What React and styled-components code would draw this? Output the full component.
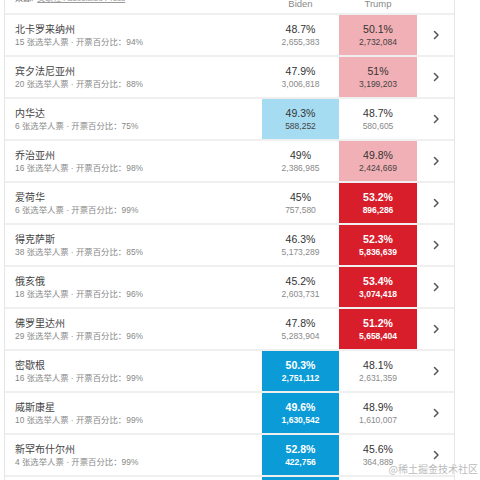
import React from 'react'
import styled, { createGlobalStyle } from 'styled-components';

const GlobalStyle = createGlobalStyle`
    html, body {
        margin: 0;
        padding: 0;
        background: #fff;
        overflow: hidden;
    }
    body {
        font-family: "Liberation Sans", Arial, "Noto Sans CJK SC", sans-serif;
    }
`;

const Page = styled.div`
    position: relative;
    width: 480px;
    height: 480px;
    overflow: hidden;
`;

const Table = styled.div`
    margin-left: 4px;
    width: 449px;
    border-left: 1px solid #e6e6e6;
    border-right: 1px solid #e6e6e6;
    margin-top: -9px;
`;

const HeaderRow = styled.div`
    display: flex;
    align-items: flex-end;
    height: 22px;
    border-bottom: 2px solid #efefef;
`;

const Source = styled.div`
    flex: 1;
    padding: 0 0 9px 10px;
    font-size: 8px;
    color: #555;
    line-height: 10px;
`;

const SourceLink = styled.span`
    color: #999;
    text-decoration: underline;
    margin-left: 4px;
`;

const HeaderCell = styled.div`
    width: ${props => props.w}px;
    text-align: center;
    font-size: 9.5px;
    color: #8a8a8a;
    line-height: 12px;
    padding-bottom: 3px;
`;

const HeaderSpacer = styled.div`
    width: 37px;
`;

const Row = styled.div`
    display: flex;
    height: 40px;
    border-bottom: 2px solid #efefef;
`;

const StateCell = styled.div`
    flex: 1;
    padding-left: 10px;
    display: flex;
    flex-direction: column;
    justify-content: center;
`;

const StateName = styled.div`
    font-size: 10px;
    color: #444;
    line-height: 13px;
`;

const StateInfo = styled.div`
    font-size: 8.4px;
    color: #888;
    line-height: 11px;
    margin-top: 1px;
`;

const VoteCell = styled.div`
    width: ${props => props.w}px;
    display: flex;
    flex-direction: column;
    align-items: center;
    justify-content: center;
    background: ${props => props.bg || 'transparent'};
    color: ${props => (props.strong ? '#fff' : '#333')};
    font-weight: ${props => (props.strong ? 700 : 400)};
`;

const Percent = styled.div`
    font-size: 10.5px;
    line-height: 13px;
`;

const Count = styled.div`
    font-size: 8.5px;
    line-height: 11px;
    margin-top: 1px;
    color: ${props => (props.strong ? '#fff' : props.light ? '#444' : '#8a8a8a')};
`;

const ArrowCell = styled.div`
    width: 37px;
    display: flex;
    align-items: center;
    justify-content: center;
`;

const Watermark = styled.div`
    position: absolute;
    right: 2px;
    bottom: 4px;
    font-family: "Noto Sans CJK SC", "Liberation Serif", serif;
    font-size: 10px;
    color: #bbb;
    text-shadow: 0 0 2px #fff, 0 0 2px #fff;
`;

const COLORS = {
    redLight: '#f1b0b5',
    red: '#d81e2b',
    blueLight: '#a6dcf1',
    blue: '#0b9bd7',
};

const states = [
    { name: '北卡罗来纳州', ev: 15, pct: 94, b: ['48.7%', '2,655,383'], t: ['50.1%', '2,732,084'], win: 't', tone: 'light' },
    { name: '宾夕法尼亚州', ev: 20, pct: 88, b: ['47.9%', '3,006,818'], t: ['51%', '3,199,203'], win: 't', tone: 'light' },
    { name: '内华达', ev: 6, pct: 75, b: ['49.3%', '588,252'], t: ['48.7%', '580,605'], win: 'b', tone: 'light' },
    { name: '乔治亚州', ev: 16, pct: 98, b: ['49%', '2,386,985'], t: ['49.8%', '2,424,669'], win: 't', tone: 'light' },
    { name: '爱荷华', ev: 6, pct: 99, b: ['45%', '757,580'], t: ['53.2%', '896,286'], win: 't', tone: 'strong' },
    { name: '得克萨斯', ev: 38, pct: 85, b: ['46.3%', '5,173,289'], t: ['52.3%', '5,836,639'], win: 't', tone: 'strong' },
    { name: '俄亥俄', ev: 18, pct: 96, b: ['45.2%', '2,603,731'], t: ['53.4%', '3,074,418'], win: 't', tone: 'strong' },
    { name: '佛罗里达州', ev: 29, pct: 96, b: ['47.8%', '5,283,904'], t: ['51.2%', '5,658,404'], win: 't', tone: 'strong' },
    { name: '密歇根', ev: 16, pct: 99, b: ['50.3%', '2,751,112'], t: ['48.1%', '2,631,359'], win: 'b', tone: 'strong' },
    { name: '威斯康星', ev: 10, pct: 99, b: ['49.6%', '1,630,542'], t: ['48.9%', '1,610,007'], win: 'b', tone: 'strong' },
    { name: '新罕布什尔州', ev: 4, pct: 99, b: ['52.8%', '422,756'], t: ['45.6%', '364,889'], win: 'b', tone: 'strong' },
    { name: '明尼苏达州', ev: 10, pct: 99, b: ['52.6%', '1,717,077'], t: ['45.4%', '1,484,065'], win: 'b', tone: 'strong' },
];

const Chevron = () => (
    <svg width="8" height="12" viewBox="0 0 8 12">
        <path d="M2.5 2.5 L6 6 L2.5 9.5" fill="none" stroke="#555" strokeWidth="1.5" strokeLinecap="round" strokeLinejoin="round" />
    </svg>
);

const Vote = ({ data, w, win, tone, red }) => {
    const strong = win && tone === 'strong';
    const light = win && tone === 'light';
    let bg;
    if (win) {
        if (red) bg = strong ? COLORS.red : COLORS.redLight;
        else bg = strong ? COLORS.blue : COLORS.blueLight;
    }
    return (
        <VoteCell w={w} bg={bg} strong={strong}>
            <Percent>{data[0]}</Percent>
            <Count strong={strong} light={light}>{data[1]}</Count>
        </VoteCell>
    );
};

const App = () => {
    return (
        <Page>
            <GlobalStyle />
            <Table>
                <HeaderRow>
                    <Source>
                        来源:<SourceLink>美联社 Associated Press</SourceLink>
                    </Source>
                    <HeaderCell w={77}>Biden</HeaderCell>
                    <HeaderCell w={78}>Trump</HeaderCell>
                    <HeaderSpacer />
                </HeaderRow>
                {states.map((s) => (
                    <Row key={s.name}>
                        <StateCell>
                            <StateName>{s.name}</StateName>
                            <StateInfo>{s.ev} 张选举人票 · 开票百分比：{s.pct}%</StateInfo>
                        </StateCell>
                        <Vote data={s.b} w={77} win={s.win === 'b'} tone={s.tone} />
                        <Vote data={s.t} w={78} win={s.win === 't'} tone={s.tone} red />
                        <ArrowCell>
                            <Chevron />
                        </ArrowCell>
                    </Row>
                ))}
            </Table>
            <Watermark>@稀土掘金技术社区</Watermark>
        </Page>
    )
}

export default App
